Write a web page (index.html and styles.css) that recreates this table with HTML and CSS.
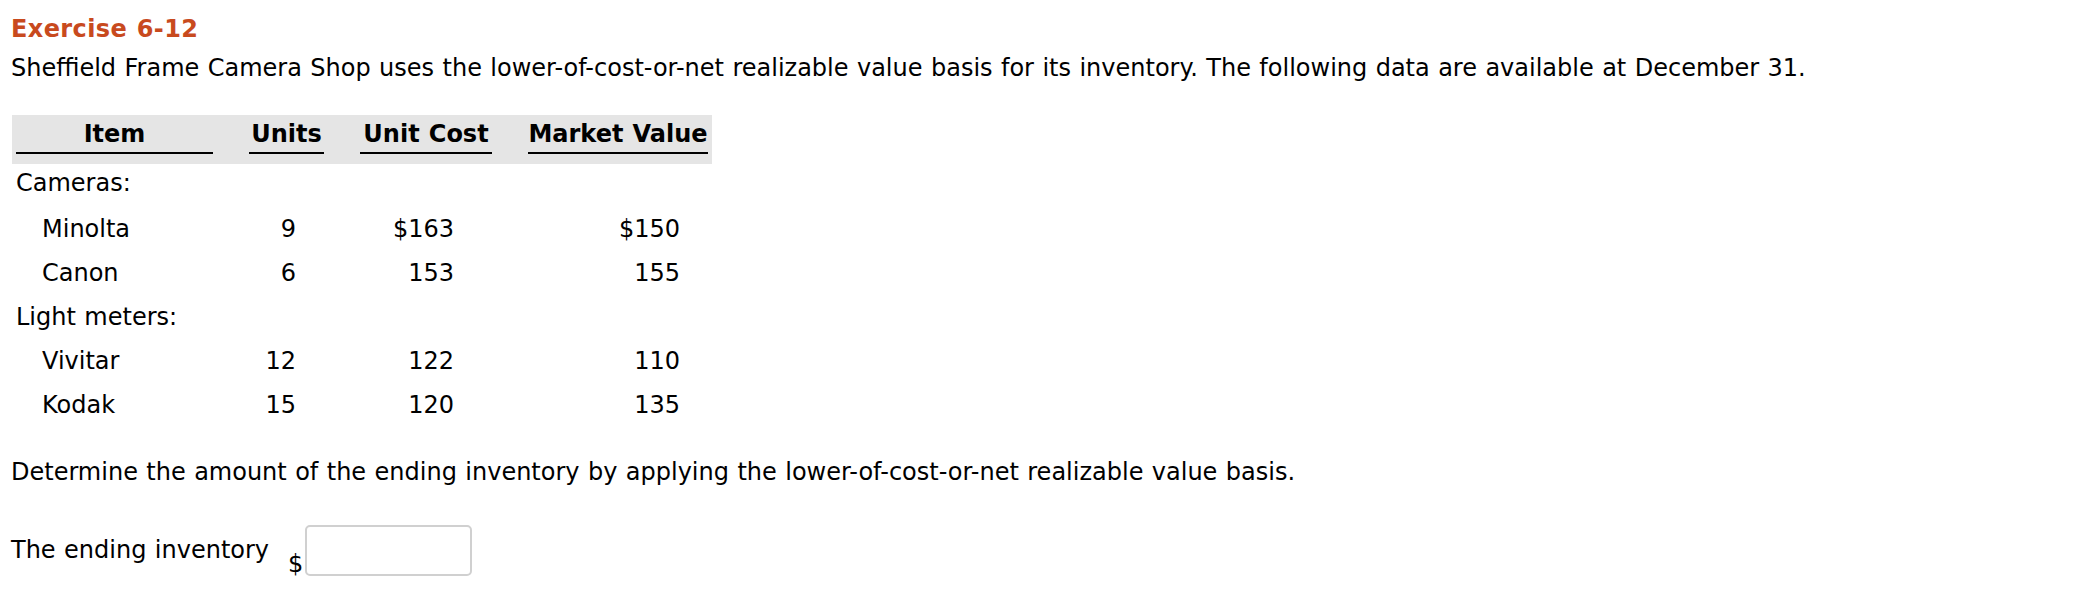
FILE: index.html
```html
<!DOCTYPE html>
<html lang="en">
<head>
<meta charset="utf-8">
<title>Exercise 6-12</title>
<link rel="stylesheet" href="styles.css">
</head>
<body>
<div class="page">
  <h1 class="title">Exercise 6-12</h1>
  <p class="intro">Sheffield Frame Camera Shop uses the lower-of-cost-or-net realizable value basis for its inventory. The following data are available at December 31.</p>
  <table class="data">
    <thead>
      <tr>
        <th class="c-item"><span>Item</span></th>
        <th class="c-units"><span>Units</span></th>
        <th class="c-cost"><span>Unit Cost</span></th>
        <th class="c-market"><span>Market Value</span></th>
      </tr>
    </thead>
    <tbody>
      <tr class="first"><td class="cat">Cameras:</td><td></td><td></td><td></td></tr>
      <tr><td class="sub">Minolta</td><td class="n-units">9</td><td class="n-cost">$163</td><td class="n-market">$150</td></tr>
      <tr><td class="sub">Canon</td><td class="n-units">6</td><td class="n-cost">153</td><td class="n-market">155</td></tr>
      <tr><td class="cat">Light meters:</td><td></td><td></td><td></td></tr>
      <tr><td class="sub">Vivitar</td><td class="n-units">12</td><td class="n-cost">122</td><td class="n-market">110</td></tr>
      <tr><td class="sub">Kodak</td><td class="n-units">15</td><td class="n-cost">120</td><td class="n-market">135</td></tr>
    </tbody>
  </table>
  <p class="question">Determine the amount of the ending inventory by applying the lower-of-cost-or-net realizable value basis.</p>
  <div class="answer">
    <span class="label">The ending inventory</span>
    <span class="cur">$</span>
    <input class="amount" type="text" aria-label="The ending inventory">
  </div>
</div>
</body>
</html>
```
FILE: styles.css
```css
body {
  margin: 0;
  background: #fff;
  color: #000;
  font-family: "DejaVu Sans", Verdana, sans-serif;
  font-size: 24px;
  word-spacing: 0.8px;
}

.page {
  padding: 15px 11px 0 11px;
}

.title {
  margin: 0;
  font-size: 24px;
  line-height: 28px;
  font-weight: bold;
  letter-spacing: 0.4px;
  color: #c84a1e;
}

.intro {
  margin: 11px 0 0;
  line-height: 28px;
}

.data {
  margin: 33px 0 0 1px;
  border-collapse: collapse;
}

.data th {
  background: #e5e5e5;
  padding: 5px 18px 10px;
  font-weight: bold;
  text-align: center;
  white-space: nowrap;
}

.data th span {
  display: block;
  line-height: 28px;
  padding-bottom: 4px;
  border-bottom: 2px solid #000;
}

.data th:first-child { padding-left: 4px; }
.data th:last-child { padding-right: 4px; }

.c-item { width: 197px; }
.c-units { width: 75px; }
.c-cost { width: 132px; }
.c-market { width: 180px; }

.data td {
  padding: 7px 18px 9px;
  line-height: 28px;
  white-space: nowrap;
}

.data tr.first td {
  padding-top: 5px;
  padding-bottom: 11px;
}

.data td.cat { padding-left: 4px; }
.data td.sub { padding-left: 30px; }

.data td.n-units { text-align: right; padding-right: 46px; }
.data td.n-cost { text-align: right; padding-right: 56px; }
.data td.n-market { text-align: right; padding-right: 32px; }

.question {
  margin: 30px 0 0;
  line-height: 28px;
}

.answer {
  display: flex;
  align-items: flex-start;
  margin-top: 39px;
}

.label {
  padding-top: 11px;
  line-height: 28px;
}

.cur {
  align-self: flex-end;
  margin-left: 19px;
  margin-bottom: -2px;
  line-height: 28px;
}

.amount {
  width: 167px;
  height: 51px;
  box-sizing: border-box;
  margin: 0 0 0 2px;
  padding: 0 8px;
  border: 2px solid #d0d0d0;
  border-radius: 5px;
  background: #fff;
  font: inherit;
}
```
